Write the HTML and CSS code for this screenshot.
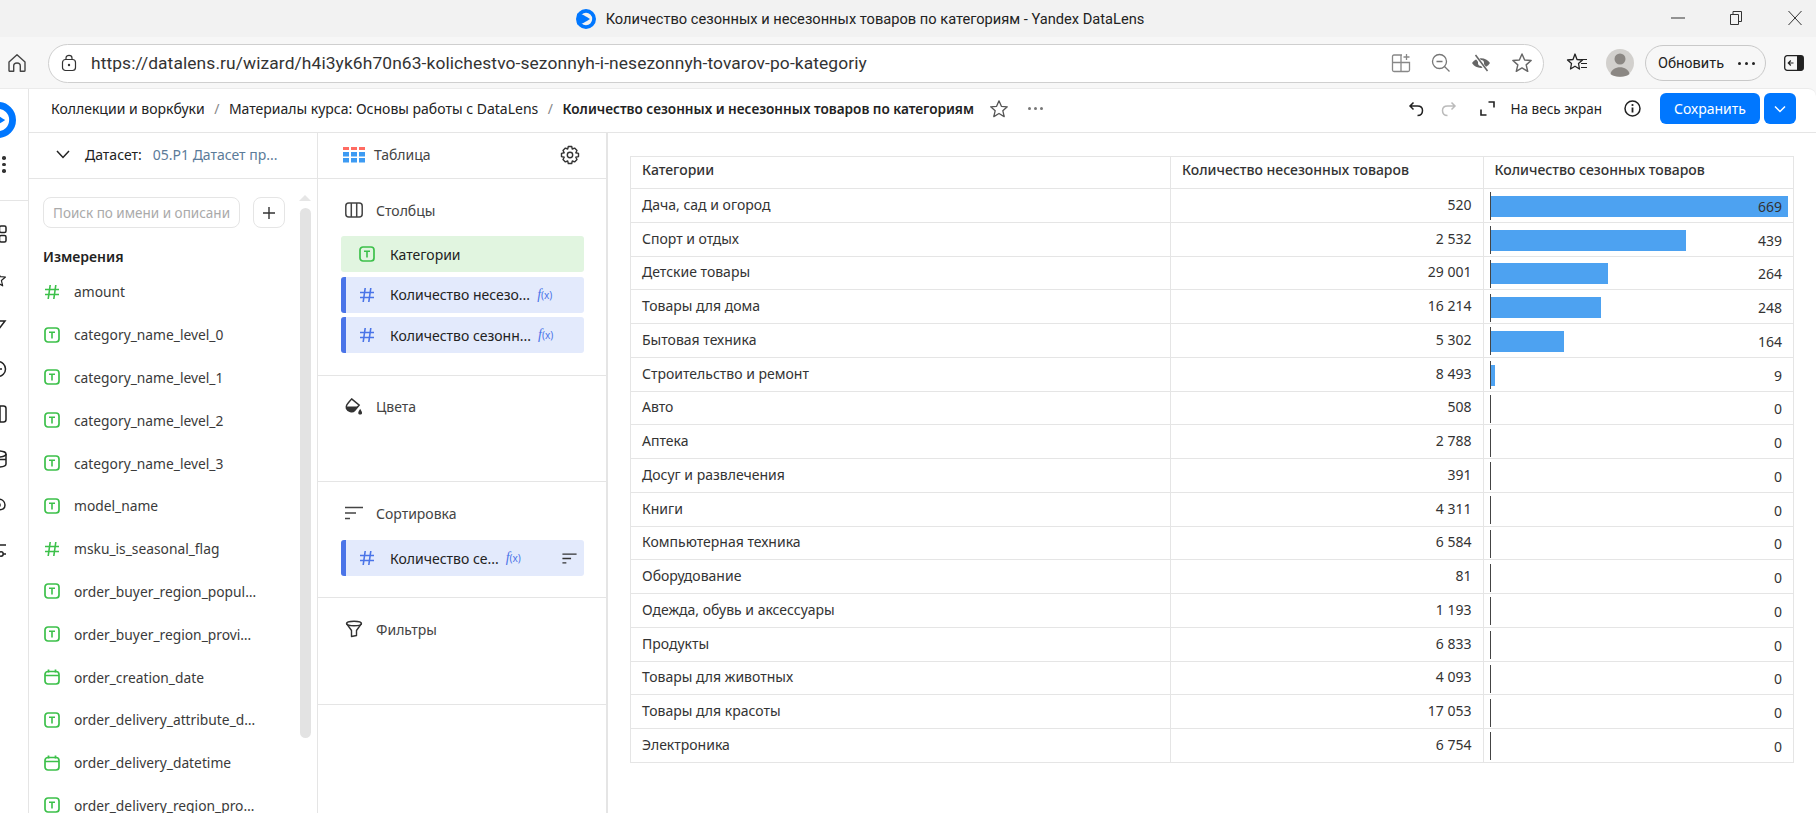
FILE: index.html
```html
<!DOCTYPE html>
<html lang="ru">
<head>
  <meta charset="UTF-8" />
  <title>Количество сезонных и несезонных товаров по категориям - Yandex DataLens</title>
  <link rel="stylesheet" href="styles.css">
</head>
<body>
  <svg class="sprites" aria-hidden="true">
    <symbol id="logo" viewBox="0 0 20 20">
      <circle cx="10" cy="10" r="8.100" fill="none" stroke="#0077ff" stroke-width="3.800"/>
      <path d="M1 4.500C6 4.500 10 7.500 14 10C10 12.500 6 15.500 1 15.500Z" fill="#0077ff"/>
    </symbol>
    <symbol id="i-text" viewBox="0 0 16 16">
      <rect x="1" y="1" width="14" height="14" rx="3" fill="none" stroke="currentColor" stroke-width="1.700"/>
      <path d="M5 5.200H11M8 5.200V11.500" fill="none" stroke="currentColor" stroke-width="1.600"/>
    </symbol>
    <symbol id="i-hash" viewBox="0 0 16 16">
      <path d="M1 5.500H15M1 10.500H15M6.200 1L4.200 15M11.800 1L9.800 15" fill="none" stroke="currentColor" stroke-width="1.600"/>
    </symbol>
    <symbol id="i-date" viewBox="0 0 16 16">
      <rect x="1" y="2.500" width="14" height="12.500" rx="3" fill="none" stroke="currentColor" stroke-width="1.700"/>
      <path d="M1 6.500H15M4.500 .5V3.500M11.500 .5V3.500" fill="none" stroke="currentColor" stroke-width="1.700"/>
    </symbol>
    <symbol id="i-sort" viewBox="0 0 18 14">
      <path d="M0 1.500H18M0 7H11M0 12.500H5" fill="none" stroke="currentColor" stroke-width="1.600"/>
    </symbol>
    <symbol id="i-star" viewBox="0 0 20 20">
      <path d="M10 1.800L12.400 7.300L18.300 7.800L13.800 11.700L15.200 17.600L10 14.500L4.800 17.600L6.200 11.700L1.700 7.800L7.600 7.300Z" fill="none" stroke="currentColor" stroke-width="1.300" stroke-linejoin="round"/>
    </symbol>
  </svg>

  <header class="titlebar">
    <div class="tab-title">
      <svg class="favicon"><use href="#logo"/></svg>
      <span>Количество сезонных и несезонных товаров по категориям - Yandex DataLens</span>
    </div>
    <div class="win-controls">
      <svg width="14" height="14" viewBox="0 0 14 14"><path d="M0 7H14" stroke="#333" stroke-width="1"/></svg>
      <svg width="14" height="16" viewBox="0 0 14 16"><path d="M1.500 4.500H9.500V14.500H1.500ZM4 4.500V1.500H12.500V11.500H9.500" fill="none" stroke="#333" stroke-width="1"/></svg>
      <svg width="16" height="16" viewBox="0 0 16 16"><path d="M1.500 1L14.500 15M14.500 1L1.500 15" fill="none" stroke="#333" stroke-width="1"/></svg>
    </div>
  </header>

  <nav class="toolbar">
    <svg class="home" width="20" height="20" viewBox="0 0 20 20"><path d="M2 9L10 1.800L18 9V17.500C18 18 17.500 18.300 17 18.300H13.300V13C13.300 9 6.700 9 6.700 13V18.300H3C2.500 18.300 2 18 2 17.500Z" fill="none" stroke="#444" stroke-width="1.400" stroke-linejoin="round"/></svg>
    <div class="address">
      <svg class="lock" width="16" height="18" viewBox="0 0 16 18"><rect x="1.500" y="5.500" width="13" height="11" rx="3" fill="none" stroke="#333" stroke-width="1.200"/><path d="M5 5.500V4C5 .5 11 .5 11 4V5.500" fill="none" stroke="#333" stroke-width="1.200"/><circle cx="8" cy="11" r="1.200" fill="#333"/></svg>
      <span class="url">https://datalens.ru/wizard/h4i3yk6h70n63-kolichestvo-sezonnyh-i-nesezonnyh-tovarov-po-kategoriy</span>
      <div class="addr-icons">
        <svg width="20" height="20" viewBox="0 0 20 20"><path d="M11 2H3C2 2 1.500 2.500 1.500 3.500V17C1.500 18 2 18.500 3 18.500H17C18 18.500 18.500 18 18.500 17V9.500H1.500M10 2V18.500M15.500 1V7M12.500 4H18.500" fill="none" stroke="#888" stroke-width="1.300"/></svg>
        <svg width="20" height="20" viewBox="0 0 20 20"><circle cx="8.500" cy="8.500" r="7" fill="none" stroke="#777" stroke-width="1.300"/><path d="M5.500 8.500H11.500M13.500 13.500L18.500 18.500" stroke="#777" stroke-width="1.300"/></svg>
        <svg width="20" height="20" viewBox="0 0 20 20"><path d="M1 10C5 3.500 15 3.500 19 10C15 16.500 5 16.500 1 10Z" fill="#666"/><circle cx="10" cy="10" r="3" fill="#fff"/><path d="M4 2L16 18" stroke="#fff" stroke-width="3.500"/><path d="M4.500 2L16.500 18" stroke="#666" stroke-width="1.500"/></svg>
        <svg class="addr-star" width="22" height="22"><use href="#i-star"/></svg>
      </div>
    </div>
    <svg class="fav-list" width="22" height="22" viewBox="0 0 22 22"><path d="M9 2L11 7.500L16.500 8L12.500 11.500L13.500 17L9 14.200L4.500 17L5.500 11.500L1.500 8L7 7.500Z" fill="none" stroke="#222" stroke-width="1.300" stroke-linejoin="round"/><path d="M15 7.500H21M15 11.500H21M15 15.500H21" stroke="#222" stroke-width="1.200"/></svg>
    <svg class="avatar" width="28" height="28" viewBox="0 0 28 28"><circle cx="14" cy="14" r="14" fill="#d2d0cd"/><circle cx="14" cy="10" r="5.500" fill="#8b8783"/><path d="M4.500 25C6 16 22 16 23.500 25C20 28.500 8 28.500 4.500 25Z" fill="#8b8783"/></svg>
    <div class="update-pill">
      <span>Обновить</span>
      <span class="pill-dots"><i></i><i></i><i></i></span>
    </div>
    <svg class="panel-icon" width="20" height="16" viewBox="0 0 20 16"><rect x=".7" y=".7" width="18.600" height="14.600" rx="2.500" fill="none" stroke="#222" stroke-width="1.300"/><path d="M13 .7H17C18.500 .7 19.300 1.500 19.300 3V13C19.300 14.500 18.500 15.300 17 15.300H13Z" fill="#222"/><path d="M9.500 8H4.500M6.800 5.500L4.300 8L6.800 10.500" fill="none" stroke="#222" stroke-width="1.200"/></svg>
  </nav>

  <div class="app">
    <aside class="rail">
      <svg class="rail-logo"><use href="#logo"/></svg>
      <div class="rail-dots"><i></i><i></i><i></i></div>
      <div class="rail-icons">
        <svg width="18" height="18" viewBox="0 0 18 18"><g fill="none" stroke="#222" stroke-width="1.500"><rect x="1" y="1" width="6.500" height="6.500" rx="1.500"/><rect x="10.500" y="1" width="6.500" height="6.500" rx="1.500"/><rect x="1" y="10.500" width="6.500" height="6.500" rx="1.500"/><rect x="10.500" y="10.500" width="6.500" height="6.500" rx="1.500"/></g></svg>
        <svg class="rail-star" width="18" height="18"><use href="#i-star"/></svg>
        <svg width="18" height="18" viewBox="0 0 18 18"><path d="M2 6H16L9 15ZM9 2V6" fill="none" stroke="#222" stroke-width="1.500"/></svg>
        <svg width="18" height="18" viewBox="0 0 18 18"><circle cx="9" cy="9" r="7.500" fill="none" stroke="#222" stroke-width="1.500"/><path d="M9 4.500V9H13" fill="none" stroke="#222" stroke-width="1.500"/></svg>
        <svg width="18" height="18" viewBox="0 0 18 18"><rect x="1" y="1" width="16" height="16" rx="2.500" fill="none" stroke="#222" stroke-width="1.500"/><path d="M11 1V17" stroke="#222" stroke-width="1.500"/></svg>
        <svg width="18" height="18" viewBox="0 0 18 18"><ellipse cx="9" cy="4" rx="8" ry="3" fill="none" stroke="#222" stroke-width="1.500"/><path d="M1 4V14C1 18 17 18 17 14V4M1 9.500H17" fill="none" stroke="#222" stroke-width="1.500"/></svg>
        <svg width="18" height="18" viewBox="0 0 18 18"><path d="M2 9C2 1 16 1 16 9C16 13 13 14 10 13.500V17" fill="none" stroke="#222" stroke-width="1.500"/><circle cx="9" cy="9" r="2" fill="none" stroke="#222" stroke-width="1.500"/></svg>
        <svg width="18" height="18" viewBox="0 0 18 18"><path d="M1 4H17M1 13H17" stroke="#222" stroke-width="1.500"/><circle cx="12" cy="13" r="2.200" fill="#fff" stroke="#222" stroke-width="1.500"/></svg>
      </div>
    </aside>

    <div class="workspace">
      <div class="crumbs-bar">
        <div class="crumbs">
          <span>Коллекции и воркбуки</span>
          <span class="sep">/</span>
          <span>Материалы курса: Основы работы с DataLens</span>
          <span class="sep">/</span>
          <strong>Количество сезонных и несезонных товаров по категориям</strong>
          <svg class="crumb-star" width="20" height="20"><use href="#i-star"/></svg>
          <span class="more-dots"><i></i><i></i><i></i></span>
        </div>
        <div class="actions">
          <svg class="undo" width="16" height="16" viewBox="0 0 16 16"><path d="M5.500 1.500L2 5L5.500 8.500M2.500 5H9.500C13.500 5 14.500 7.500 14.500 9.500C14.500 12 13 14.500 9.500 14.500" fill="none" stroke="#222" stroke-width="1.500"/></svg>
          <svg class="redo" width="16" height="16" viewBox="0 0 16 16"><path d="M10.500 1.500L14 5L10.500 8.500M13.500 5H6.500C2.500 5 1.500 7.500 1.500 9.500C1.500 12 3 14.500 6.500 14.500" fill="none" stroke="#bbb" stroke-width="1.500"/></svg>
          <svg class="expand" width="15" height="15" viewBox="0 0 15 15"><path d="M8.500 1H14V6.500M6.500 14H1V8.500" fill="none" stroke="#222" stroke-width="1.600"/></svg>
          <span class="full-label">На весь экран</span>
          <svg class="info" width="17" height="17" viewBox="0 0 17 17"><circle cx="8.500" cy="8.500" r="7.500" fill="none" stroke="#222" stroke-width="1.500"/><path d="M8.500 7.500V12.500" stroke="#222" stroke-width="1.800"/><circle cx="8.500" cy="5" r="1.100" fill="#222"/></svg>
          <button class="btn-save">Сохранить</button>
          <button class="btn-more" aria-label="Ещё"><svg width="12" height="8" viewBox="0 0 12 8"><path d="M1 1.500L6 6.500L11 1.500" fill="none" stroke="#fff" stroke-width="1.500"/></svg></button>
        </div>
      </div>

      <div class="columns">
        <section class="dataset">
          <div class="panel-head">
            <svg class="ds-chevron" width="14" height="9" viewBox="0 0 14 9"><path d="M1 1L7 7.500L13 1" fill="none" stroke="#222" stroke-width="1.500"/></svg>
            <span class="ds-label">Датасет:</span>
            <span class="ds-name">05.P1 Датасет пр...</span>
          </div>
          <div class="ds-body">
            <div class="ds-scroll">
              <div class="search-row">
                <input class="search" placeholder="Поиск по имени и описанию">
                <button class="add-btn" aria-label="Добавить"><svg width="14" height="14" viewBox="0 0 14 14"><path d="M7 1V13M1 7H13" stroke="#333" stroke-width="1.400"/></svg></button>
              </div>
              <h4 class="group-title">Измерения</h4>
              <ul class="fields">
                <li><svg><use href="#i-hash"/></svg>amount</li>
                <li><svg><use href="#i-text"/></svg>category_name_level_0</li>
                <li><svg><use href="#i-text"/></svg>category_name_level_1</li>
                <li><svg><use href="#i-text"/></svg>category_name_level_2</li>
                <li><svg><use href="#i-text"/></svg>category_name_level_3</li>
                <li><svg><use href="#i-text"/></svg>model_name</li>
                <li><svg><use href="#i-hash"/></svg>msku_is_seasonal_flag</li>
                <li><svg><use href="#i-text"/></svg>order_buyer_region_popul…</li>
                <li><svg><use href="#i-text"/></svg>order_buyer_region_provi…</li>
                <li><svg><use href="#i-date"/></svg>order_creation_date</li>
                <li><svg><use href="#i-text"/></svg>order_delivery_attribute_d…</li>
                <li><svg><use href="#i-date"/></svg>order_delivery_datetime</li>
                <li><svg><use href="#i-text"/></svg>order_delivery_region_pro…</li>
              </ul>
            </div>
            <div class="scrollbar"><span class="scroll-up"></span><span class="scroll-thumb"></span></div>
          </div>
        </section>

        <section class="wizard">
          <div class="panel-head wizard-head">
            <svg class="table-icon" width="22" height="16" viewBox="0 0 22 16">
              <g fill="#ff6b62"><rect width="6" height="3"/><rect x="8" width="6" height="3"/><rect x="16" width="6" height="3"/></g>
              <g fill="#3d9bf3"><rect y="5" width="6" height="4.500"/><rect x="8" y="5" width="6" height="4.500"/><rect x="16" y="5" width="6" height="4.500"/><rect y="11" width="6" height="4.500"/><rect x="8" y="11" width="6" height="4.500"/><rect x="16" y="11" width="6" height="4.500"/></g>
            </svg>
            <span class="viz-name">Таблица</span>
            <svg class="gear" width="20" height="20" viewBox="0 0 20 20"><path d="M8.300 1.500H11.700L12.300 4L14.600 3.100L17 5.500L15.800 7.800L18.500 8.400V11.600L15.800 12.200L17 14.500L14.600 16.900L12.300 16L11.700 18.500H8.300L7.700 16L5.400 16.900L3 14.500L4.200 12.200L1.500 11.600V8.400L4.200 7.800L3 5.500L5.400 3.100L7.700 4Z" fill="none" stroke="#333" stroke-width="1.400" stroke-linejoin="round"/><circle cx="10" cy="10" r="2.700" fill="none" stroke="#333" stroke-width="1.400"/></svg>
          </div>

          <div class="slot slot-columns">
            <div class="slot-title">
              <svg width="18" height="16" viewBox="0 0 18 16"><rect x=".8" y="1" width="16.400" height="14" rx="3" fill="none" stroke="#444" stroke-width="1.500"/><path d="M6.300 1V15M11.700 1V15" stroke="#444" stroke-width="1.500"/></svg>
              <span>Столбцы</span>
            </div>
            <div class="chip chip-dim"><svg class="chip-icon"><use href="#i-text"/></svg><span class="chip-text">Категории</span></div>
            <div class="chip chip-measure"><svg class="chip-icon"><use href="#i-hash"/></svg><span class="chip-text">Количество несезо...</span><span class="fx"><em>f</em>(x)</span></div>
            <div class="chip chip-measure"><svg class="chip-icon"><use href="#i-hash"/></svg><span class="chip-text">Количество сезонн...</span><span class="fx"><em>f</em>(x)</span></div>
          </div>

          <div class="slot slot-colors">
            <div class="slot-title">
              <svg width="19" height="19" viewBox="0 0 19 19"><path d="M7 1.500L15 8L10 14C8 16 3 15 1.500 11.500C1 9 1 8 7 1.500Z" fill="none" stroke="#333" stroke-width="1.500"/><path d="M1.500 9.500H14L10 14C8 16 3 15 1.500 11.500Z" fill="#333"/><path d="M16 12C17 14 18 15 18 16.300C18 18.500 14 18.500 14 16.300C14 15 15 14 16 12Z" fill="#333"/></svg>
              <span>Цвета</span>
            </div>
          </div>

          <div class="slot slot-sort">
            <div class="slot-title">
              <svg width="18" height="14"><use href="#i-sort"/></svg>
              <span>Сортировка</span>
            </div>
            <div class="chip chip-measure"><svg class="chip-icon"><use href="#i-hash"/></svg><span class="chip-text">Количество се...</span><span class="fx"><em>f</em>(x)</span><svg class="chip-sort" width="15" height="11"><use href="#i-sort"/></svg></div>
          </div>

          <div class="slot slot-filters">
            <div class="slot-title">
              <svg width="18" height="18" viewBox="0 0 18 18"><ellipse cx="9" cy="3.500" rx="7.500" ry="2.300" fill="none" stroke="#333" stroke-width="1.400"/><path d="M1.500 3.500L6.500 10.500V16.500L11.500 15.500V10.500L16.500 3.500" fill="none" stroke="#333" stroke-width="1.400" stroke-linejoin="round"/></svg>
              <span>Фильтры</span>
            </div>
          </div>
        </section>

        <main class="preview">
          <table class="report">
            <colgroup><col class="col-name"><col class="col-plain"><col class="col-bar"></colgroup>
            <thead>
              <tr><th>Категории</th><th>Количество несезонных товаров</th><th>Количество сезонных товаров</th></tr>
            </thead>
            <tbody>
              <tr><td>Дача, сад и огород</td><td class="num">520</td><td class="bar-cell"><div class="bar-box"><div class="bar" style="width:297px"></div><span>669</span></div></td></tr>
              <tr><td>Спорт и отдых</td><td class="num">2 532</td><td class="bar-cell"><div class="bar-box"><div class="bar" style="width:195px"></div><span>439</span></div></td></tr>
              <tr><td>Детские товары</td><td class="num">29 001</td><td class="bar-cell"><div class="bar-box"><div class="bar" style="width:117px"></div><span>264</span></div></td></tr>
              <tr><td>Товары для дома</td><td class="num">16 214</td><td class="bar-cell"><div class="bar-box"><div class="bar" style="width:110px"></div><span>248</span></div></td></tr>
              <tr><td>Бытовая техника</td><td class="num">5 302</td><td class="bar-cell"><div class="bar-box"><div class="bar" style="width:73px"></div><span>164</span></div></td></tr>
              <tr><td>Строительство и ремонт</td><td class="num">8 493</td><td class="bar-cell"><div class="bar-box"><div class="bar" style="width:4px"></div><span>9</span></div></td></tr>
              <tr><td>Авто</td><td class="num">508</td><td class="bar-cell"><div class="bar-box"><span>0</span></div></td></tr>
              <tr><td>Аптека</td><td class="num">2 788</td><td class="bar-cell"><div class="bar-box"><span>0</span></div></td></tr>
              <tr><td>Досуг и развлечения</td><td class="num">391</td><td class="bar-cell"><div class="bar-box"><span>0</span></div></td></tr>
              <tr><td>Книги</td><td class="num">4 311</td><td class="bar-cell"><div class="bar-box"><span>0</span></div></td></tr>
              <tr><td>Компьютерная техника</td><td class="num">6 584</td><td class="bar-cell"><div class="bar-box"><span>0</span></div></td></tr>
              <tr><td>Оборудование</td><td class="num">81</td><td class="bar-cell"><div class="bar-box"><span>0</span></div></td></tr>
              <tr><td>Одежда, обувь и аксессуары</td><td class="num">1 193</td><td class="bar-cell"><div class="bar-box"><span>0</span></div></td></tr>
              <tr><td>Продукты</td><td class="num">6 833</td><td class="bar-cell"><div class="bar-box"><span>0</span></div></td></tr>
              <tr><td>Товары для животных</td><td class="num">4 093</td><td class="bar-cell"><div class="bar-box"><span>0</span></div></td></tr>
              <tr><td>Товары для красоты</td><td class="num">17 053</td><td class="bar-cell"><div class="bar-box"><span>0</span></div></td></tr>
              <tr><td>Электроника</td><td class="num">6 754</td><td class="bar-cell"><div class="bar-box"><span>0</span></div></td></tr>
            </tbody>
          </table>
        </main>
      </div>
    </div>
  </div>
</body>
</html>
```

FILE: styles.css
```css
/* Reset and base */
* {
  box-sizing: border-box;
  margin: 0;
  padding: 0;
}
body {
  width: 1816px;
  height: 813px;
  overflow: hidden;
  background: #f7f7f7;
  font-family: 'Noto Sans', sans-serif;
  color: #222;
}
.sprites {
  display: none;
}
button {
  border: none;
  font-family: inherit;
  cursor: pointer;
}

/* Window title */
.titlebar {
  height: 37px;
  background: #f2f2f2;
  display: flex;
  align-items: center;
  position: relative;
  justify-content: center;
}
.tab-title {
  display: flex;
  align-items: center;
  gap: 10px;
  font-family: Roboto, sans-serif;
  font-size: 14.650px;
  color: #222;
  margin-left: -96px;
}
.favicon {
  width: 20px;
  height: 20px;
}
.win-controls {
  position: absolute;
  right: 13px;
  top: 10px;
  display: flex;
  align-items: center;
  gap: 44px;
}

/* Address bar */
.toolbar {
  height: 51px;
  display: flex;
  align-items: center;
  padding-left: 7px;
  padding-top: 1px;
}
.home {
  margin-right: 21px;
}
.address {
  width: 1496px;
  height: 39px;
  background: #fff;
  border: 1px solid #cfcfcf;
  border-radius: 20px;
  display: flex;
  align-items: center;
  padding-left: 12px;
  font-family: Roboto, sans-serif;
}
.url {
  margin-left: 14px;
  font-size: 17.400px;
  color: #333;
  letter-spacing: .1px;
}
.addr-icons {
  margin-left: auto;
  display: flex;
  align-items: center;
  gap: 20px;
  padding-right: 10px;
}
.addr-star {
  color: #666;
}
.fav-list {
  margin-left: 22px;
}
.avatar {
  margin-left: 18px;
}
.update-pill {
  width: 121px;
  height: 36px;
  margin-left: 11px;
  border: 1px solid #c9c9c9;
  border-radius: 18px;
  display: flex;
  align-items: center;
  padding-left: 12px;
  font-family: Roboto, sans-serif;
  font-size: 14.500px;
  color: #222;
}
.pill-dots {
  display: flex;
  gap: 4px;
  margin-left: 14px;
}
.pill-dots i {
  width: 3px;
  height: 3px;
  border-radius: 50%;
  background: #222;
}
.panel-icon {
  margin-left: 18px;
}

/* App frame */
.app {
  height: 725px;
  display: flex;
  background: #fff;
  border-top-right-radius: 8px;
  border-top: 1px solid #ebebeb;
}
.rail {
  width: 29px;
  flex: none;
  border-right: 1px solid #e5e5e5;
  display: flex;
  flex-direction: column;
  overflow: hidden;
  padding-top: 13px;
}
.rail-logo {
  width: 36px;
  height: 36px;
  margin-left: -20px;
  flex: none;
}
.rail-dots {
  display: flex;
  flex-direction: column;
  gap: 3px;
  margin-top: 18px;
  padding: 0 0 27px 2px;
  width: 100%;
  border-bottom: 1px solid #e5e5e5;
}
.rail-dots i, .more-dots i {
  display: block;
  width: 3.500px;
  height: 3.500px;
  border-radius: 50%;
  background: #333;
}
.rail-icons {
  display: flex;
  flex-direction: column;
  gap: 27.200px;
  margin: 24px 0 0 -11px;
}
.rail-icons svg {
  flex: none;
}
.rail-star {
  color: #222;
}

.workspace {
  flex: 1;
  min-width: 0;
  display: flex;
  flex-direction: column;
}
.crumbs-bar {
  height: 44px;
  flex: none;
  display: flex;
  align-items: center;
  border-bottom: 1px solid #e5e5e5;
  padding: 0 0 4px 22px;
  font-size: 14px;
}
.crumbs {
  display: flex;
  align-items: center;
}
.crumbs .sep {
  color: #888;
  margin: 0 9.500px;
}
.crumbs strong {
  font-weight: 600;
  font-size: 13.600px;
}
.crumb-star {
  margin-left: 15px;
  color: #555;
}
.more-dots {
  display: flex;
  gap: 3px;
  margin-left: 19px;
}
.more-dots i {
  width: 3px;
  height: 3px;
  background: #777;
}
.actions {
  margin-left: auto;
  display: flex;
  align-items: center;
  padding-right: 20px;
}
.redo {
  margin-left: 17px;
}
.expand {
  margin-left: 23px;
}
.full-label {
  margin-left: 16px;
  font-size: 13.500px;
}
.info {
  margin-left: 22px;
}
.btn-save {
  margin-left: 19px;
  width: 100px;
  height: 31px;
  background: #0077ff;
  color: #fff;
  border-radius: 6px;
  font-size: 14px;
}
.btn-more {
  margin-left: 4px;
  width: 32px;
  height: 31px;
  background: #0077ff;
  border-radius: 6px;
  display: flex;
  align-items: center;
  justify-content: center;
}

.columns {
  flex: 1;
  min-height: 0;
  display: flex;
}

/* Dataset panel */
.dataset {
  width: 289px;
  flex: none;
  border-right: 1px solid #e5e5e5;
  display: flex;
  flex-direction: column;
  overflow: hidden;
}
.panel-head {
  height: 46px;
  flex: none;
  display: flex;
  align-items: center;
  border-bottom: 1px solid #e5e5e5;
  padding-bottom: 2px;
  font-size: 14px;
}
.ds-chevron {
  margin-left: 27px;
}
.ds-label {
  margin-left: 15px;
}
.ds-name {
  margin-left: 11px;
  color: #5b7b99;
}
.ds-body {
  display: flex;
  flex: 1;
  min-height: 0;
}
.ds-scroll {
  flex: 1;
  padding: 18px 0 0 14px;
}
.search-row {
  display: flex;
  gap: 13px;
}
.search {
  width: 197px;
  height: 31px;
  border: 1px solid #e5e5e5;
  border-radius: 8px;
  padding: 0 9px;
  font-family: inherit;
  font-size: 13.500px;
  outline: none;
}
.search::placeholder {
  color: #aaa;
}
.add-btn {
  width: 32px;
  height: 31px;
  background: #fff;
  border: 1px solid #e5e5e5;
  border-radius: 8px;
  display: flex;
  align-items: center;
  justify-content: center;
}
.group-title {
  margin-top: 19px;
  font-size: 14px;
  font-weight: 600;
  line-height: 20px;
}
.fields {
  list-style: none;
  margin-top: 3.500px;
}
.fields li {
  height: 42.800px;
  display: flex;
  align-items: center;
  gap: 14px;
  padding-left: 1px;
  font-size: 13.800px;
  color: #3a3a3a;
  white-space: nowrap;
}
.fields svg {
  width: 16px;
  height: 16px;
  color: #3cc04a;
  flex: none;
}
.scrollbar {
  width: 16px;
  flex: none;
  margin-right: 4px;
  padding-top: 16px;
  display: flex;
  flex-direction: column;
  align-items: center;
}
.scroll-up {
  width: 0;
  height: 0;
  border-left: 6px solid transparent;
  border-right: 6px solid transparent;
  border-bottom: 6px solid #e6e6e6;
}
.scroll-thumb {
  width: 11px;
  height: 530px;
  margin-top: 7px;
  background: #e3e3e3;
  border-radius: 6px;
}

/* Wizard panel */
.wizard {
  width: 290px;
  flex: none;
  border-right: 2px solid #e5e5e5;
}
.table-icon {
  margin-left: 25px;
}
.viz-name {
  margin-left: 9px;
  color: #444;
}
.gear {
  margin-left: auto;
  margin-right: 26px;
}
.slot {
  border-bottom: 1px solid #e5e5e5;
  padding: 0 0 0 23px;
}
.slot-columns { height: 197px; }
.slot-colors { height: 106px; }
.slot-sort { height: 116px; }
.slot-filters { height: 107px; }
.slot-title {
  height: 20px;
  display: flex;
  align-items: center;
  font-size: 14px;
  color: #444;
  position: relative;
  top: 21px;
}
.slot-colors .slot-title {
  top: 20px;
}
.slot-title svg {
  width: 18px;
  margin-left: 4px;
  margin-right: 13px;
}
.slot-columns .slot-title + .chip {
  margin-top: 37px;
}
.slot-sort .slot-title + .chip {
  margin-top: 38px;
}
.chip {
  width: 243px;
  height: 36px;
  display: flex;
  align-items: center;
  border-radius: 3px;
  font-size: 14px;
  color: #222;
  margin-top: 4.500px;
}
.chip-dim {
  background: #e1f5e0;
}
.chip-dim .chip-icon {
  color: #3cc04a;
}
.chip-measure {
  background: #e3eafc;
  border-left: 5px solid #4a74e8;
}
.chip-measure .chip-icon {
  color: #4a74e8;
}
.chip-icon {
  width: 16px;
  height: 16px;
  margin-left: 18px;
  flex: none;
}
.chip-measure .chip-icon {
  margin-left: 13px;
}
.chip-text {
  margin-left: 15px;
  white-space: nowrap;
}
.fx {
  margin-left: 7px;
  font-size: 10px;
  color: #4a74e8;
  white-space: nowrap;
}
.fx em {
  font-family: 'Liberation Serif', serif;
  font-size: 14px;
}
.chip-sort {
  margin-left: auto;
  margin-right: 7px;
  color: #333;
}

/* Report table */
.preview {
  flex: 1;
  padding: 23px 0 0 22px;
}
.report {
  width: 1163px;
  table-layout: fixed;
  border-collapse: collapse;
  font-size: 14px;
  color: #333;
}
.col-name { width: 540px; }
.col-plain { width: 312.500px; }
.col-bar { width: 310.500px; }
.report th, .report td {
  border: 1px solid #e5e5e5;
  padding: 0 11px 2px;
  text-align: left;
  height: 33.760px;
  white-space: nowrap;
}
.report th {
  height: 32px;
  padding-bottom: 6px;
  font-weight: 500;
  color: #333;
}
.report td.num {
  text-align: right;
}
.report td.bar-cell {
  padding: 0;
}
.bar-box {
  display: grid;
  height: 28px;
  margin: 3px 0 1px 6px;
  border-left: 1px solid #444;
  align-items: center;
}
.bar, .bar-box span {
  grid-area: 1 / 1;
}
.bar {
  height: 21px;
  background: #4da2f1;
}
.bar-box span {
  justify-self: end;
  margin-right: 11px;
}
```
